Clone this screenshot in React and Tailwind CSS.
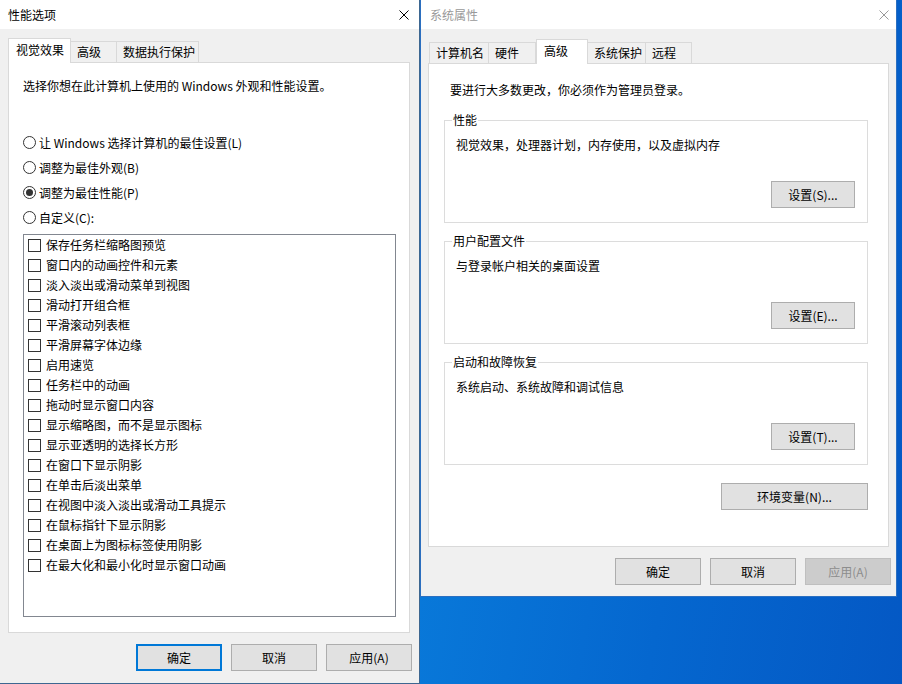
import React from 'react';

const effects = [
    '保存任务栏缩略图预览',
    '窗口内的动画控件和元素',
    '淡入淡出或滑动菜单到视图',
    '滑动打开组合框',
    '平滑滚动列表框',
    '平滑屏幕字体边缘',
    '启用速览',
    '任务栏中的动画',
    '拖动时显示窗口内容',
    '显示缩略图，而不是显示图标',
    '显示亚透明的选择长方形',
    '在窗口下显示阴影',
    '在单击后淡出菜单',
    '在视图中淡入淡出或滑动工具提示',
    '在鼠标指针下显示阴影',
    '在桌面上为图标标签使用阴影',
    '在最大化和最小化时显示窗口动画',
];

const radios = [
    { label: '让 Windows 选择计算机的最佳设置(L)', checked: false },
    { label: '调整为最佳外观(B)', checked: false },
    { label: '调整为最佳性能(P)', checked: true },
    { label: '自定义(C):', checked: false },
];

const groups = [
    { title: '性能', text: '视觉效果，处理器计划，内存使用，以及虚拟内存', button: '设置(S)...' },
    { title: '用户配置文件', text: '与登录帐户相关的桌面设置', button: '设置(E)...' },
    { title: '启动和故障恢复', text: '系统启动、系统故障和调试信息', button: '设置(T)...' },
];

const CloseIcon = ({ color }) => (
    <svg width="10" height="10" viewBox="0 0 10 10" className="block">
        <path d="M0.5 0.5 L9.5 9.5 M9.5 0.5 L0.5 9.5" stroke={color} strokeWidth="1" fill="none" />
    </svg>
);

const Button = ({ children, primary, disabled, className = '' }) => (
    <button
        className={
            'h-[27px] flex items-center justify-center text-[12px] leading-none ' +
            (primary
                ? 'border-2 border-[#0078d7] bg-[#e1e1e1] text-black '
                : disabled
                    ? 'border border-[#bfbfbf] bg-[#cccccc] text-[#8d8d8d] '
                    : 'border border-[#adadad] bg-[#e1e1e1] text-black ') +
            className
        }
    >
        {children}
    </button>
);

const Tab = ({ label, active, width }) => (
    <div
        className={
            'flex items-start border-t border-l border-r border-[#d9d9d9] text-[12px] leading-[16px] ' +
            (active ? 'h-[25px] bg-white relative z-10 -mb-px pt-[3px] pl-[7px]' : 'h-[21px] bg-[#f0f0f0] pt-[2px] pl-[6px] -ml-px')
        }
        style={{ width }}
    >
        {label}
    </div>
);

const PerformanceDialog = () => (
    <div className="w-[420px] h-[684px] shrink-0 bg-[#f0f0f0] border-r border-b border-[#3d6791] flex flex-col text-black">
        {/* 标题栏 */}
        <div className="h-[29px] bg-white flex items-center justify-between pl-[8px] pr-[10px]">
            <span className="text-[12px] leading-[16px]">性能选项</span>
            <CloseIcon color="#000" />
        </div>

        <div className="pl-[8px] pt-[9px]">
            <div className="h-[24px] flex items-end">
                <Tab label="视觉效果" active width={63} />
                <Tab label="高级" width={47} />
                <Tab label="数据执行保护" width={83} />
            </div>
            <div className="w-[402px] h-[571px] bg-white border border-[#d9d9d9] pl-[14px] pt-[15px]">
                <div className="text-[12px] leading-[16px]">选择你想在此计算机上使用的 Windows 外观和性能设置。</div>

                <div className="mt-[36px] flex flex-col">
                    {radios.map((r) => (
                        <div key={r.label} className="h-[25px] flex items-center gap-[3px] text-[12px] leading-[16px]">
                            <span className="w-[13px] h-[13px] rounded-full border border-[#333] bg-white flex items-center justify-center">
                                {r.checked && <span className="w-[7px] h-[7px] rounded-full bg-[#333]" />}
                            </span>
                            <span>{r.label}</span>
                        </div>
                    ))}
                </div>

                <div className="mt-[4px] w-[373px] h-[383px] border border-[#828790] bg-white flex flex-col">
                    {effects.map((e) => (
                        <div key={e} className="h-[20px] shrink-0 flex items-center pl-[4px] gap-[5px] text-[12px] leading-[16px]">
                            <span className="w-[13px] h-[13px] border border-[#333] bg-white" />
                            <span>{e}</span>
                        </div>
                    ))}
                </div>
            </div>
        </div>

        <div className="mt-[11px] flex justify-end gap-[9px] pr-[7px]">
            <Button primary className="w-[86px]">确定</Button>
            <Button className="w-[86px]">取消</Button>
            <Button className="w-[86px]">应用(A)</Button>
        </div>
    </div>
);

const SystemDialog = () => (
    <div className="w-[477px] h-[597px] shrink-0 bg-[#f0f0f0] border-l border-r border-b border-[#2b6fc0] flex flex-col text-black">
        <div className="h-[29px] bg-white flex items-center justify-between pl-[9px] pr-[7px]">
            <span className="text-[12px] leading-[16px] text-[#999]">系统属性</span>
            <CloseIcon color="#999" />
        </div>

        <div className="pl-[7px] pt-[10px]">
            <div className="h-[24px] flex items-end pl-[2px]">
                <Tab label="计算机名" width={60} />
                <Tab label="硬件" width={48} />
                <Tab label="高级" active width={52} />
                <Tab label="系统保护" width={59} />
                <Tab label="远程" width={47} />
            </div>
            <div className="w-[461px] h-[484px] bg-white border border-[#d9d9d9] pl-[15px] pt-[18px] flex flex-col">
                <div className="pl-[6px] text-[12px] leading-[16px]">要进行大多数更改，你必须作为管理员登录。</div>

                <div className="mt-[22px] flex flex-col gap-[18px]">
                    {groups.map((g) => (
                        <div key={g.title} className="relative w-[424px] h-[103px] border border-[#dcdcdc] flex flex-col pl-[11px] pt-[16px] pr-[12px] pb-[14px]">
                            <span className="absolute left-[7px] -top-[9px] bg-white px-[1px] text-[12px] leading-[16px]">{g.title}</span>
                            <div className="text-[12px] leading-[16px]">{g.text}</div>
                            <div className="mt-auto flex justify-end">
                                <Button className="w-[84px]">{g.button}</Button>
                            </div>
                        </div>
                    ))}
                </div>

                <div className="mt-[18px] w-[424px] flex justify-end">
                    <Button className="w-[147px]">环境变量(N)...</Button>
                </div>
            </div>
        </div>

        <div className="mt-[11px] flex justify-end gap-[9px] pr-[5px]">
            <Button className="w-[86px]">确定</Button>
            <Button className="w-[86px]">取消</Button>
            <Button disabled className="w-[86px]">应用(A)</Button>
        </div>
    </div>
);

export default function App() {
    return (
        <div className="w-[902px] h-[684px] overflow-hidden flex items-start bg-[linear-gradient(100deg,#1896e8_0%,#0b84e0_35%,#0567cf_75%,#0458c4_100%)] font-['Noto_Sans_CJK_SC','Noto_Sans',sans-serif]">
            <PerformanceDialog />
            <SystemDialog />
        </div>
    );
}
